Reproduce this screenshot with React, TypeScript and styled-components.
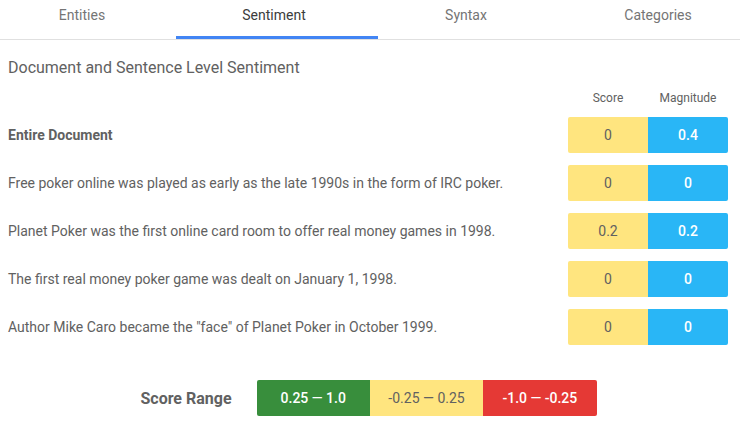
import React from "react";
import styled, { createGlobalStyle } from "styled-components";

const GlobalStyle = createGlobalStyle`
  body {
    margin: 0;
    background: #fff;
    font-family: Roboto, "Liberation Sans", Arial, sans-serif;
  }
`;

const tabs = ["Entities", "Sentiment", "Syntax", "Categories"];

const rows = [
  { text: "Entire Document", score: "0", magnitude: "0.4", strong: true },
  { text: "Free poker online was played as early as the late 1990s in the form of IRC poker.", score: "0", magnitude: "0" },
  { text: "Planet Poker was the first online card room to offer real money games in 1998.", score: "0.2", magnitude: "0.2" },
  { text: "The first real money poker game was dealt on January 1, 1998.", score: "0", magnitude: "0" },
  { text: "Author Mike Caro became the \"face\" of Planet Poker in October 1999.", score: "0", magnitude: "0" },
];

const App: React.FC = () => {
  return (
    <Page>
      <GlobalStyle />
      <TabBar>
        <TabStrip>
          {tabs.map((t) => (
            <Tab key={t} $active={t === "Sentiment"}>
              {t}
            </Tab>
          ))}
        </TabStrip>
      </TabBar>

      <Content>
        <Title>Document and Sentence Level Sentiment</Title>
        <Table>
          <span />
          <HeadCell>Score</HeadCell>
          <HeadCell>Magnitude</HeadCell>
          {rows.map((r) => (
            <React.Fragment key={r.text}>
              <RowLabel $strong={r.strong}>{r.text}</RowLabel>
              <ScoreCell>{r.score}</ScoreCell>
              <MagnitudeCell>{r.magnitude}</MagnitudeCell>
            </React.Fragment>
          ))}
        </Table>
      </Content>

      <Legend>
        <LegendLabel>Score Range</LegendLabel>
        <RangeBar>
          <Range $tone="positive">0.25 — 1.0</Range>
          <Range $tone="neutral">-0.25 — 0.25</Range>
          <Range $tone="negative">-1.0 — -0.25</Range>
        </RangeBar>
      </Legend>
    </Page>
  );
};

const Page = styled.div`
  width: 740px;
  color: #616161;
`;

const TabBar = styled.div`
  height: 39px;
  border-bottom: 1px solid #e0e0e0;
  overflow: hidden;
`;

const TabStrip = styled.div`
  display: flex;
  margin-left: -14px;
  height: 100%;
`;

const Tab = styled.div<{ $active?: boolean }>`
  position: relative;
  flex: 0 0 192px;
  padding-top: 5px;
  box-sizing: border-box;
  text-align: center;
  font-size: 14px;
  line-height: 20px;
  color: ${(p) => (p.$active ? "#3c3c3c" : "#757575")};

  &::after {
    content: "";
    display: ${(p) => (p.$active ? "block" : "none")};
    position: absolute;
    left: -2px;
    right: -8px;
    bottom: 0;
    height: 3px;
    background: #4285f4;
  }
`;

const Content = styled.div`
  padding: 18px 12px 0 8px;
`;

const Title = styled.div`
  font-size: 16px;
  line-height: 20px;
  color: #616161;
`;

const Table = styled.div`
  display: grid;
  grid-template-columns: 1fr 80px 80px;
  grid-template-rows: 14px;
  grid-auto-rows: 36px;
  row-gap: 12px;
  margin-top: 13px;
`;

const HeadCell = styled.div`
  font-size: 12px;
  line-height: 14px;
  text-align: center;
  color: #616161;
`;

const RowLabel = styled.div<{ $strong?: boolean }>`
  display: flex;
  align-items: center;
  font-size: 14px;
  font-weight: ${(p) => (p.$strong ? 700 : 400)};
  color: #616161;
`;

const Cell = styled.div`
  display: flex;
  align-items: center;
  justify-content: center;
  font-size: 14px;
`;

const ScoreCell = styled(Cell)`
  background: #ffe57f;
  color: #616161;
  border-radius: 2px 0 0 2px;
`;

const MagnitudeCell = styled(Cell)`
  background: #29b6f6;
  color: #fff;
  font-weight: 500;
  border-radius: 0 2px 2px 0;
`;

const Legend = styled.div`
  display: flex;
  align-items: center;
  justify-content: center;
  gap: 25px;
  margin-top: 35px;
  padding-right: 3px;
`;

const LegendLabel = styled.div`
  font-size: 16px;
  font-weight: 700;
  color: #616161;
`;

const RangeBar = styled.div`
  display: flex;
  width: 340px;
  height: 36px;
  border-radius: 2px;
  overflow: hidden;
`;

const toneColors = {
  positive: { bg: "#388e3c", fg: "#fff", weight: 500 },
  neutral: { bg: "#ffe57f", fg: "#616161", weight: 400 },
  negative: { bg: "#e53935", fg: "#fff", weight: 500 },
};

const Range = styled.div<{ $tone: keyof typeof toneColors }>`
  flex: 1;
  display: flex;
  align-items: center;
  justify-content: center;
  font-size: 14px;
  background: ${(p) => toneColors[p.$tone].bg};
  color: ${(p) => toneColors[p.$tone].fg};
  font-weight: ${(p) => toneColors[p.$tone].weight};
`;

export default App;
